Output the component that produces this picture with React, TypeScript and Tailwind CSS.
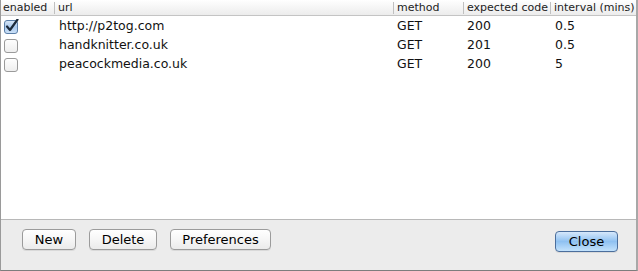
import React from "react";

const ROWS = [
  { enabled: true, url: "http://p2tog.com", method: "GET", code: "200", interval: "0.5" },
  { enabled: false, url: "handknitter.co.uk", method: "GET", code: "201", interval: "0.5" },
  { enabled: false, url: "peacockmedia.co.uk", method: "GET", code: "200", interval: "5" },
];

function Checkbox({ checked }: { checked: boolean }) {
  return (
    <svg width="15" height="15" viewBox="0 0 15 15">
      <defs>
        <linearGradient id={checked ? "cbOn" : "cbOff"} x1="0" y1="0" x2="0" y2="1">
          {checked ? (
            <>
              <stop offset="0" stopColor="#dbe9f8" />
              <stop offset="0.5" stopColor="#a9c9ee" />
              <stop offset="1" stopColor="#cfe3f8" />
            </>
          ) : (
            <>
              <stop offset="0" stopColor="#ffffff" />
              <stop offset="1" stopColor="#eeeeee" />
            </>
          )}
        </linearGradient>
      </defs>
      <rect
        x="0.5"
        y="1.5"
        width="13"
        height="13"
        rx="2.5"
        fill={checked ? "url(#cbOn)" : "url(#cbOff)"}
        stroke={checked ? "#5b7fa8" : "#9a9a9a"}
      />
      {checked && (
        <path d="M3 7.5 L6 11 L13.5 0.5" fill="none" stroke="#1c2a3a" strokeWidth="2.2" strokeLinecap="round" strokeLinejoin="round" />
      )}
    </svg>
  );
}

function Button({ children, primary, width }: { children: React.ReactNode; primary?: boolean; width: string }) {
  return (
    <button
      className={
        (primary
          ? "h-[21px] rounded-[4px] border border-[#4b6e9c] bg-gradient-to-b from-[#d6e8fb] via-[#8fc1f1] to-[#c3e2fc] text-[13px] leading-none text-black shadow-[0_1px_0_rgba(0,0,0,0.08)] "
          : "h-[21px] rounded-[4px] border border-[#9b9b9b] bg-gradient-to-b from-white via-[#f6f6f6] to-[#ebebeb] text-[13px] leading-none text-black shadow-[0_1px_0_rgba(0,0,0,0.08)] ") +
        width
      }
    >
      {children}
    </button>
  );
}

export default function App() {
  return (
    <div className="flex h-[271px] w-[638px] flex-col border-b border-l border-r-2 border-b-[#7d7d7d] border-l-[#9a9a9a] border-r-[#a8a8a8] bg-white font-['Lucida_Grande','DejaVu_Sans',sans-serif] text-black">
      <div className="flex-1">
        <div className="flex h-[16px] items-center border-b border-[#c4c4c4] bg-gradient-to-b from-white to-[#ececec] text-[11px] leading-none text-[#222]">
          <div className="w-[53px] pl-[2px]">enabled</div>
          <div className="h-[12px] w-px bg-[#c0c0c0]" />
          <div className="w-[338px] pl-[3px]">url</div>
          <div className="h-[12px] w-px bg-[#c0c0c0]" />
          <div className="w-[69px] pl-[3px]">method</div>
          <div className="h-[12px] w-px bg-[#c0c0c0]" />
          <div className="w-[86px] pl-[3px]">expected code</div>
          <div className="h-[12px] w-px bg-[#c0c0c0]" />
          <div className="pl-[3px]">interval (mins)</div>
        </div>
        <div className="pt-[1px]">
          {ROWS.map((r) => (
            <div key={r.url} className="flex h-[19px] items-center text-[12.5px] leading-none text-[#111]">
              <div className="flex w-[54px] pl-[3px]">
                <Checkbox checked={r.enabled} />
              </div>
              <div className="w-[339px] pl-[4px]">{r.url}</div>
              <div className="w-[70px] pl-[3px]">{r.method}</div>
              <div className="w-[87px] pl-[3px]">{r.code}</div>
              <div className="pl-[4px]">{r.interval}</div>
            </div>
          ))}
        </div>
      </div>
      <div className="flex h-[51px] items-start border-t border-[#b8b8b8] bg-[#ececec] pt-[9px] pl-[21px] pr-[18px]">
        <div className="flex gap-[13px]">
          <Button width="w-[54px]">New</Button>
          <Button width="w-[68px]">Delete</Button>
          <Button width="w-[101px]">Preferences</Button>
        </div>
        <div className="ml-auto">
          <Button primary width="w-[63px]">Close</Button>
        </div>
      </div>
    </div>
  );
}
